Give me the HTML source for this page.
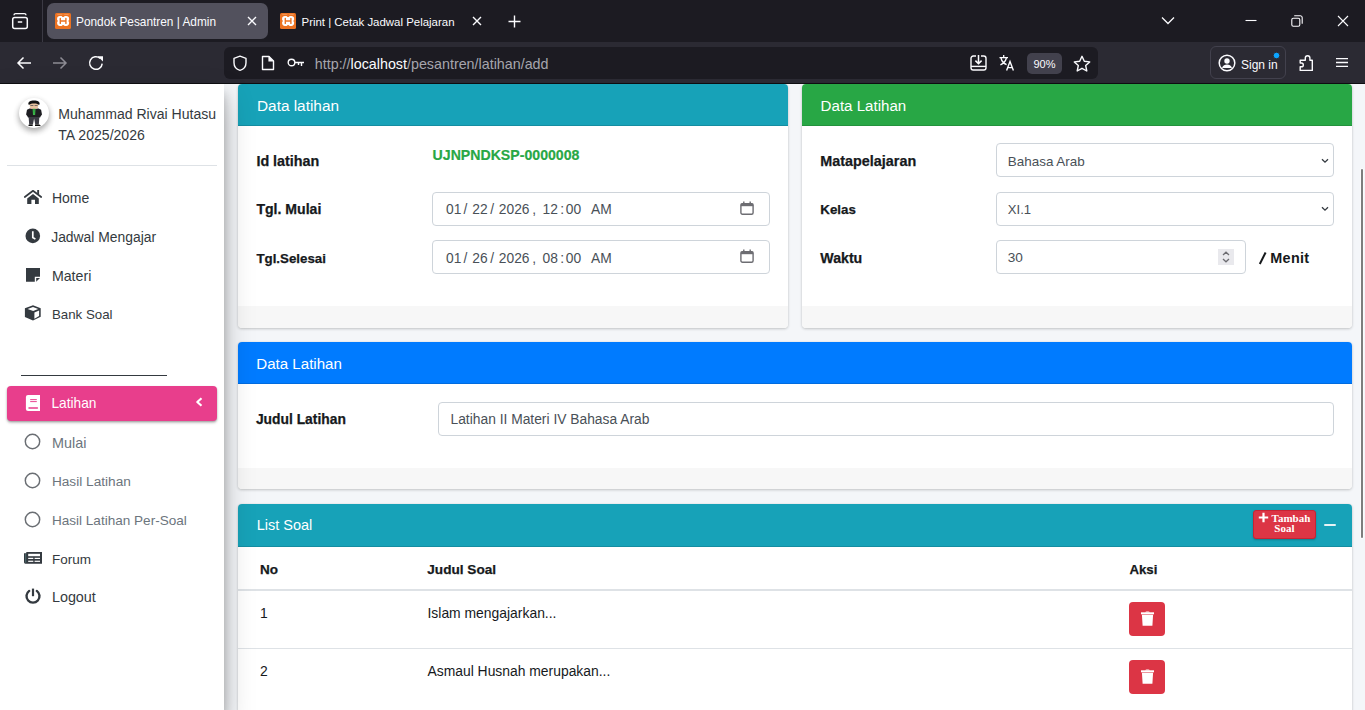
<!DOCTYPE html>
<html><head><meta charset="utf-8"><title>Pondok Pesantren | Admin</title>
<style>
*{box-sizing:border-box;margin:0;padding:0}
html,body{width:1365px;height:710px;overflow:hidden;background:#f4f6f9;font-family:"Liberation Sans",sans-serif}
body{position:relative}
.a{position:absolute;display:block}
.t{position:absolute;white-space:pre;font-family:"Liberation Sans",sans-serif}
</style></head><body>
<div class="a" style="left:0px;top:0px;width:1365px;height:42px;background:#1c1b22"></div>
<div class="a" style="left:0px;top:42px;width:1365px;height:41px;background:#2b2a33"></div>
<div class="a" style="left:0px;top:83px;width:1365px;height:1px;background:#0f0f12"></div>
<svg class="a" style="left:8px;top:8px;" width="24" height="24" viewBox="0 0 24 24"><path d="M6 7.2q0-1.6 1.6-1.6h8.8q1.6 0 1.6 1.6" fill="none" stroke="#fbfbfe" stroke-width="1.4"/><rect x="4.7" y="9.4" width="14.6" height="11.2" rx="2" fill="none" stroke="#fbfbfe" stroke-width="1.5"/><path d="M9.8 14h4.4" stroke="#fbfbfe" stroke-width="1.5"/></svg>
<div class="a" style="left:42px;top:0px;width:1px;height:42px;background:#3b3a44"></div>
<div class="a" style="left:47px;top:3px;width:221px;height:36px;background:#52515d;border-radius:7px"></div>
<svg class="a" style="left:55px;top:13px;" width="16" height="16" viewBox="0 0 16 16"><rect x="0" y="0" width="16" height="16" rx="1.5" fill="#ec7322"/><path d="M2.3 1.4h11.4" stroke="#f6a870" stroke-width=".7"/><rect x="2.1" y="3.1" width="12" height="9.8" rx="2.8" fill="#fff"/><circle cx="8.1" cy="2.5" r="1.5" fill="#ec7322"/><circle cx="8.1" cy="13.5" r="1.5" fill="#ec7322"/><circle cx="1.5" cy="8" r="1.2" fill="#ec7322"/><circle cx="14.7" cy="8" r="1.2" fill="#ec7322"/><path d="M5.3 5.5v4.9M10.9 5.5v4.9M5.3 8h5.6" stroke="#ec7322" stroke-width="1.4" stroke-linecap="round"/></svg>
<div class="t" style="left:76px;top:16.67px;font-size:11.85px;line-height:11.85px;color:#fbfbfe;font-weight:normal;font-family:'Liberation Sans', sans-serif;">Pondok Pesantren | Admin</div>
<svg class="a" style="left:247px;top:16px;" width="10" height="10" viewBox="0 0 10 10"><path d="M1 1l8 8M9 1l-8 8" stroke="#fbfbfe" stroke-width="1.4"/></svg>
<svg class="a" style="left:280px;top:13px;" width="16" height="16" viewBox="0 0 16 16"><rect x="0" y="0" width="16" height="16" rx="1.5" fill="#ec7322"/><path d="M2.3 1.4h11.4" stroke="#f6a870" stroke-width=".7"/><rect x="2.1" y="3.1" width="12" height="9.8" rx="2.8" fill="#fff"/><circle cx="8.1" cy="2.5" r="1.5" fill="#ec7322"/><circle cx="8.1" cy="13.5" r="1.5" fill="#ec7322"/><circle cx="1.5" cy="8" r="1.2" fill="#ec7322"/><circle cx="14.7" cy="8" r="1.2" fill="#ec7322"/><path d="M5.3 5.5v4.9M10.9 5.5v4.9M5.3 8h5.6" stroke="#ec7322" stroke-width="1.4" stroke-linecap="round"/></svg>
<div class="t" style="left:301.5px;top:17.01px;font-size:11.45px;line-height:11.45px;color:#fbfbfe;font-weight:normal;font-family:'Liberation Sans', sans-serif;">Print | Cetak Jadwal Pelajaran</div>
<svg class="a" style="left:472px;top:16px;" width="10" height="10" viewBox="0 0 10 10"><path d="M1 1l8 8M9 1l-8 8" stroke="#fbfbfe" stroke-width="1.4"/></svg>
<svg class="a" style="left:508px;top:15px;" width="13" height="13" viewBox="0 0 13 13"><path d="M6.5 0.5v12M0.5 6.5h12" stroke="#fbfbfe" stroke-width="1.4"/></svg>
<svg class="a" style="left:1161px;top:16px;" width="14" height="9" viewBox="0 0 14 9"><path d="M1 1.5l6 6 6-6" fill="none" stroke="#fbfbfe" stroke-width="1.3"/></svg>
<svg class="a" style="left:1245px;top:19px;" width="12" height="3" viewBox="0 0 12 3"><path d="M0.5 1.5h11" stroke="#fbfbfe" stroke-width="1.1"/></svg>
<svg class="a" style="left:1291px;top:15px;" width="12" height="12" viewBox="0 0 12 12"><rect x="0.8" y="3.2" width="8" height="8" rx="1.5" fill="none" stroke="#fbfbfe" stroke-width="1.1"/><path d="M3.2 0.8h6a2 2 0 0 1 2 2v6" fill="none" stroke="#fbfbfe" stroke-width="1.1"/></svg>
<svg class="a" style="left:1337px;top:15px;" width="12" height="12" viewBox="0 0 12 12"><path d="M1 1l10 10M11 1l-10 10" stroke="#fbfbfe" stroke-width="1.1"/></svg>
<svg class="a" style="left:16px;top:56px;" width="16" height="14" viewBox="0 0 16 14"><path d="M15 7H2M7.5 1.5L2 7l5.5 5.5" fill="none" stroke="#fbfbfe" stroke-width="1.5"/></svg>
<svg class="a" style="left:52px;top:56px;" width="16" height="14" viewBox="0 0 16 14"><path d="M1 7h13M8.5 1.5L14 7l-5.5 5.5" fill="none" stroke="#8d8c94" stroke-width="1.5"/></svg>
<svg class="a" style="left:88px;top:55px;" width="16" height="16" viewBox="0 0 16 16"><path d="M14.2 8.6A6.3 6.3 0 1 1 12.2 3.4" fill="none" stroke="#fbfbfe" stroke-width="1.5"/><path d="M9.6 1.2h5.4v5.4z" fill="#fbfbfe"/></svg>
<div class="a" style="left:224px;top:47px;width:874px;height:32px;background:#1c1b22;border-radius:6px"></div>
<svg class="a" style="left:232px;top:55px;" width="16" height="17" viewBox="0 0 16 17"><path d="M8 1.2L2 3.4v4.4c0 3.6 2.6 6.6 6 7.6 3.4-1 6-4 6-7.6V3.4z" fill="none" stroke="#fbfbfe" stroke-width="1.4" stroke-linejoin="round"/></svg>
<svg class="a" style="left:261px;top:55px;" width="14" height="16" viewBox="0 0 14 16"><path d="M1.5 1.5h6.5l4.5 4.5v8.5h-11z" fill="none" stroke="#fbfbfe" stroke-width="1.4" stroke-linejoin="round"/><path d="M8 1.5v4.5h4.5" fill="#fbfbfe" stroke="#fbfbfe" stroke-width="1.2"/></svg>
<svg class="a" style="left:287px;top:57px;" width="18" height="11" viewBox="0 0 18 11"><circle cx="4.5" cy="5.5" r="3.3" fill="none" stroke="#fbfbfe" stroke-width="1.4"/><path d="M8 5.5h9M14.5 5.5v3.5M11.5 5.5v2.5" fill="none" stroke="#fbfbfe" stroke-width="1.4"/></svg>
<div class="t" style="left:314.8px;top:56.90px;font-size:14.3px;line-height:14.3px;color:#a6a5ad;font-weight:normal;font-family:'Liberation Sans', sans-serif;">http://<span style="color:#fbfbfe">localhost</span>/pesantren/latihan/add</div>
<svg class="a" style="left:970px;top:55px;" width="18" height="16" viewBox="0 0 18 16"><path d="M6 1H3.2A2.2 2.2 0 0 0 1 3.2v9.6A2.2 2.2 0 0 0 3.2 15h10.6a2.2 2.2 0 0 0 2.2-2.2V3.2A2.2 2.2 0 0 0 13.8 1H11" fill="none" stroke="#fbfbfe" stroke-width="1.4"/><path d="M1 11.4h15" stroke="#fbfbfe" stroke-width="1.4"/><path d="M8.5 0v8.6M5.4 5.6l3.1 3.1 3.1-3.1" fill="none" stroke="#fbfbfe" stroke-width="1.5"/></svg>
<svg class="a" style="left:998px;top:54px;" width="18" height="18" viewBox="0 0 18 18"><path d="M1.5 3.6h8.5M5.7 1v2.6M3 4c.7 3.2 2.6 5.4 5.6 6.6M8.4 4c-.8 3.2-2.8 5.4-6 6.9" fill="none" stroke="#fbfbfe" stroke-width="1.3"/><path d="M8.6 16.6l3.4-9 3.4 9M9.8 13.6h4.4" fill="none" stroke="#fbfbfe" stroke-width="1.4"/></svg>
<div class="a" style="left:1027px;top:53px;width:35px;height:21px;background:#42414d;border-radius:5px"></div>
<div class="t" style="left:1033.5px;top:58.69px;font-size:11px;line-height:11px;color:#fbfbfe;font-weight:normal;font-family:'Liberation Sans', sans-serif;">90%</div>
<svg class="a" style="left:1073px;top:55px;" width="18" height="17" viewBox="0 0 18 17"><path d="M9 1.3l2.3 5 5.4.6-4 3.7 1.1 5.4L9 13.3l-4.8 2.7 1.1-5.4-4-3.7 5.4-.6z" fill="none" stroke="#fbfbfe" stroke-width="1.4" stroke-linejoin="round"/></svg>
<div class="a" style="left:1210px;top:46px;width:76px;height:33px;border:1px solid #42414d;border-radius:6px"></div>
<svg class="a" style="left:1218px;top:54px;" width="18" height="18" viewBox="0 0 18 18"><circle cx="9" cy="9" r="7.8" fill="none" stroke="#fbfbfe" stroke-width="1.5"/><circle cx="9" cy="7" r="2.7" fill="#fbfbfe"/><path d="M4 14c1-2.4 2.8-3.4 5-3.4s4 1 5 3.4" fill="#fbfbfe"/></svg>
<div class="t" style="left:1241px;top:58.84px;font-size:12.0px;line-height:12.0px;color:#fbfbfe;font-weight:normal;font-family:'Liberation Sans', sans-serif;">Sign in</div>
<svg class="a" style="left:1272px;top:51px;" width="9" height="9" viewBox="0 0 9 9"><circle cx="4.5" cy="4.5" r="3.3" fill="#0ba4ff" stroke="#2b2a33" stroke-width="1"/></svg>
<svg class="a" style="left:1299px;top:54px;" width="16" height="18" viewBox="0 0 16 18"><path d="M4.3 6.2h2V4a2.3 2.3 0 0 1 4.6 0v2.2h2.4V16.4H1.2v-3.6H2.4a1.9 1.9 0 0 0 0-3.8H1.2V6.2z" fill="none" stroke="#fbfbfe" stroke-width="1.4" stroke-linejoin="round"/></svg>
<svg class="a" style="left:1335px;top:57px;" width="14" height="11" viewBox="0 0 14 11"><path d="M1 1.6h12M1 5.5h12M1 9.4h12" stroke="#fbfbfe" stroke-width="1.3"/></svg>
<div class="a" style="left:0px;top:84px;width:1365px;height:626px;background:#f4f6f9"></div>
<div class="a" style="left:238px;top:84px;width:550px;height:244px;background:#fff;border-radius:4px;box-shadow:0 0 1px rgba(0,0,0,.125),0 1px 3px rgba(0,0,0,.2)"></div>
<div class="a" style="left:238px;top:84px;width:550px;height:42px;background:#17a2b8;border-radius:4px 4px 0 0;border-bottom:1px solid rgba(0,0,0,.125)"></div>
<div class="a" style="left:238px;top:306px;width:550px;height:22px;background:#f7f7f7;border-radius:0 0 4px 4px"></div>
<div class="t" style="left:257px;top:97.90px;font-size:15.36px;line-height:15.36px;color:#fff;font-weight:normal;font-family:'Liberation Sans', sans-serif;">Data latihan</div>
<div class="t" style="left:256.4px;top:153.85px;font-size:14.35px;line-height:14.35px;color:#16191c;font-weight:bold;font-family:'Liberation Sans', sans-serif;-webkit-text-stroke:0.25px #16191c">Id latihan</div>
<div class="t" style="left:432.6px;top:148.33px;font-size:14.14px;line-height:14.14px;color:#28a745;font-weight:bold;font-family:'Liberation Sans', sans-serif;-webkit-text-stroke:0.2px #28a745">UJNPNDKSP-0000008</div>
<div class="t" style="left:256.4px;top:202.46px;font-size:14.1px;line-height:14.1px;color:#16191c;font-weight:bold;font-family:'Liberation Sans', sans-serif;-webkit-text-stroke:0.25px #16191c">Tgl. Mulai</div>
<div class="t" style="left:256.4px;top:251.94px;font-size:13.3px;line-height:13.3px;color:#16191c;font-weight:bold;font-family:'Liberation Sans', sans-serif;-webkit-text-stroke:0.25px #16191c">Tgl.Selesai</div>
<div class="a" style="left:432px;top:192px;width:338px;height:34px;background:#fff;border:1px solid #ced4da;border-radius:4px"></div>
<div class="t" style="left:446px;top:203.12px;font-size:13.8px;line-height:13.8px;color:#495057;font-weight:normal;font-family:'Liberation Sans', sans-serif;">01</div>
<div class="t" style="left:463.5px;top:203.12px;font-size:13.8px;line-height:13.8px;color:#495057;font-weight:normal;font-family:'Liberation Sans', sans-serif;">/</div>
<div class="t" style="left:472.3px;top:203.12px;font-size:13.8px;line-height:13.8px;color:#495057;font-weight:normal;font-family:'Liberation Sans', sans-serif;">22</div>
<div class="t" style="left:490.2px;top:203.12px;font-size:13.8px;line-height:13.8px;color:#495057;font-weight:normal;font-family:'Liberation Sans', sans-serif;">/</div>
<div class="t" style="left:498.8px;top:203.12px;font-size:13.8px;line-height:13.8px;color:#495057;font-weight:normal;font-family:'Liberation Sans', sans-serif;">2026</div>
<div class="t" style="left:532.3px;top:203.12px;font-size:13.8px;line-height:13.8px;color:#495057;font-weight:normal;font-family:'Liberation Sans', sans-serif;">,</div>
<div class="t" style="left:542.5px;top:203.12px;font-size:13.8px;line-height:13.8px;color:#495057;font-weight:normal;font-family:'Liberation Sans', sans-serif;">12</div>
<div class="t" style="left:560.2px;top:203.12px;font-size:13.8px;line-height:13.8px;color:#495057;font-weight:normal;font-family:'Liberation Sans', sans-serif;">:</div>
<div class="t" style="left:565.8px;top:203.12px;font-size:13.8px;line-height:13.8px;color:#495057;font-weight:normal;font-family:'Liberation Sans', sans-serif;">00</div>
<div class="t" style="left:591px;top:203.12px;font-size:13.8px;line-height:13.8px;color:#495057;font-weight:normal;font-family:'Liberation Sans', sans-serif;">AM</div>
<svg class="a" style="left:740px;top:201px;" width="14" height="14" viewBox="0 0 14 14"><rect x="0.9" y="2.6" width="12.2" height="10.6" rx="1.5" fill="none" stroke="#6d6d72" stroke-width="1.4"/><rect x="0.9" y="2.6" width="12.2" height="2.6" fill="#6d6d72"/><path d="M3.8 0.5v3M10.2 0.5v3" stroke="#6d6d72" stroke-width="1.4"/></svg>
<div class="a" style="left:432px;top:240px;width:338px;height:34px;background:#fff;border:1px solid #ced4da;border-radius:4px"></div>
<div class="t" style="left:446px;top:252.22px;font-size:13.8px;line-height:13.8px;color:#495057;font-weight:normal;font-family:'Liberation Sans', sans-serif;">01</div>
<div class="t" style="left:463.5px;top:252.22px;font-size:13.8px;line-height:13.8px;color:#495057;font-weight:normal;font-family:'Liberation Sans', sans-serif;">/</div>
<div class="t" style="left:472.3px;top:252.22px;font-size:13.8px;line-height:13.8px;color:#495057;font-weight:normal;font-family:'Liberation Sans', sans-serif;">26</div>
<div class="t" style="left:490.2px;top:252.22px;font-size:13.8px;line-height:13.8px;color:#495057;font-weight:normal;font-family:'Liberation Sans', sans-serif;">/</div>
<div class="t" style="left:498.8px;top:252.22px;font-size:13.8px;line-height:13.8px;color:#495057;font-weight:normal;font-family:'Liberation Sans', sans-serif;">2026</div>
<div class="t" style="left:532.3px;top:252.22px;font-size:13.8px;line-height:13.8px;color:#495057;font-weight:normal;font-family:'Liberation Sans', sans-serif;">,</div>
<div class="t" style="left:542.5px;top:252.22px;font-size:13.8px;line-height:13.8px;color:#495057;font-weight:normal;font-family:'Liberation Sans', sans-serif;">08</div>
<div class="t" style="left:560.2px;top:252.22px;font-size:13.8px;line-height:13.8px;color:#495057;font-weight:normal;font-family:'Liberation Sans', sans-serif;">:</div>
<div class="t" style="left:565.8px;top:252.22px;font-size:13.8px;line-height:13.8px;color:#495057;font-weight:normal;font-family:'Liberation Sans', sans-serif;">00</div>
<div class="t" style="left:591px;top:252.22px;font-size:13.8px;line-height:13.8px;color:#495057;font-weight:normal;font-family:'Liberation Sans', sans-serif;">AM</div>
<svg class="a" style="left:740px;top:249px;" width="14" height="14" viewBox="0 0 14 14"><rect x="0.9" y="2.6" width="12.2" height="10.6" rx="1.5" fill="none" stroke="#6d6d72" stroke-width="1.4"/><rect x="0.9" y="2.6" width="12.2" height="2.6" fill="#6d6d72"/><path d="M3.8 0.5v3M10.2 0.5v3" stroke="#6d6d72" stroke-width="1.4"/></svg>
<div class="a" style="left:802px;top:84px;width:550px;height:244px;background:#fff;border-radius:4px;box-shadow:0 0 1px rgba(0,0,0,.125),0 1px 3px rgba(0,0,0,.2)"></div>
<div class="a" style="left:802px;top:84px;width:550px;height:42px;background:#28a745;border-radius:4px 4px 0 0;border-bottom:1px solid rgba(0,0,0,.125)"></div>
<div class="a" style="left:802px;top:306px;width:550px;height:22px;background:#f7f7f7;border-radius:0 0 4px 4px"></div>
<div class="t" style="left:820.6px;top:98.12px;font-size:15.1px;line-height:15.1px;color:#fff;font-weight:normal;font-family:'Liberation Sans', sans-serif;">Data Latihan</div>
<div class="t" style="left:820.3px;top:153.82px;font-size:14.39px;line-height:14.39px;color:#16191c;font-weight:bold;font-family:'Liberation Sans', sans-serif;-webkit-text-stroke:0.25px #16191c">Matapelajaran</div>
<div class="a" style="left:996px;top:143px;width:338px;height:34px;background:#fff;border:1px solid #ced4da;border-radius:4px"></div>
<div class="t" style="left:1007.8px;top:154.61px;font-size:13.45px;line-height:13.45px;color:#495057;font-weight:normal;font-family:'Liberation Sans', sans-serif;">Bahasa Arab</div>
<svg class="a" style="left:1321px;top:158px;" width="8" height="6" viewBox="0 0 8 6"><path d="M1 1.2l3 3 3-3" fill="none" stroke="#343a40" stroke-width="1.3"/></svg>
<div class="t" style="left:820.3px;top:203.24px;font-size:13.3px;line-height:13.3px;color:#16191c;font-weight:bold;font-family:'Liberation Sans', sans-serif;-webkit-text-stroke:0.25px #16191c">Kelas</div>
<div class="a" style="left:996px;top:192px;width:338px;height:34px;background:#fff;border:1px solid #ced4da;border-radius:4px"></div>
<div class="t" style="left:1007.8px;top:202.91px;font-size:13.1px;line-height:13.1px;color:#495057;font-weight:normal;font-family:'Liberation Sans', sans-serif;">XI.1</div>
<svg class="a" style="left:1321px;top:206px;" width="8" height="6" viewBox="0 0 8 6"><path d="M1 1.2l3 3 3-3" fill="none" stroke="#343a40" stroke-width="1.3"/></svg>
<div class="t" style="left:820.3px;top:251.01px;font-size:14.17px;line-height:14.17px;color:#16191c;font-weight:bold;font-family:'Liberation Sans', sans-serif;-webkit-text-stroke:0.25px #16191c">Waktu</div>
<div class="a" style="left:996px;top:240px;width:250px;height:34px;background:#fff;border:1px solid #ced4da;border-radius:4px"></div>
<div class="t" style="left:1007.8px;top:251.49px;font-size:13.6px;line-height:13.6px;color:#495057;font-weight:normal;font-family:'Liberation Sans', sans-serif;">30</div>
<div class="a" style="left:1218px;top:249px;width:16px;height:16px;background:#e9e9ed"></div>
<svg class="a" style="left:1221px;top:250px;" width="10" height="14" viewBox="0 0 10 14"><path d="M2 5l3-2.8 3 2.8M2 9l3 2.8 3-2.8" fill="none" stroke="#6d6d72" stroke-width="1.3"/></svg>
<svg class="a" style="left:1258px;top:251px;" width="10" height="14" viewBox="0 0 10 14"><path d="M1.8 13L7.6 1.5" stroke="#16191c" stroke-width="2"/></svg>
<div class="t" style="left:1270.3px;top:251.01px;font-size:14.4px;line-height:14.4px;color:#16191c;font-weight:bold;font-family:'Liberation Sans', sans-serif;letter-spacing:0.3px">Menit</div>
<div class="a" style="left:238px;top:342px;width:1114px;height:147px;background:#fff;border-radius:4px;box-shadow:0 0 1px rgba(0,0,0,.125),0 1px 3px rgba(0,0,0,.2)"></div>
<div class="a" style="left:238px;top:342px;width:1114px;height:42px;background:#007bff;border-radius:4px 4px 0 0;border-bottom:1px solid rgba(0,0,0,.125)"></div>
<div class="a" style="left:238px;top:468px;width:1114px;height:21px;background:#f7f7f7;border-radius:0 0 4px 4px"></div>
<div class="t" style="left:256.3px;top:356.02px;font-size:15.1px;line-height:15.1px;color:#fff;font-weight:normal;font-family:'Liberation Sans', sans-serif;">Data Latihan</div>
<div class="t" style="left:255.9px;top:412.88px;font-size:13.85px;line-height:13.85px;color:#16191c;font-weight:bold;font-family:'Liberation Sans', sans-serif;-webkit-text-stroke:0.25px #16191c">Judul Latihan</div>
<div class="a" style="left:438px;top:402px;width:896px;height:34px;background:#fff;border:1px solid #ced4da;border-radius:4px"></div>
<div class="t" style="left:450.5px;top:412.90px;font-size:13.82px;line-height:13.82px;color:#495057;font-weight:normal;font-family:'Liberation Sans', sans-serif;">Latihan II Materi IV Bahasa Arab</div>
<div class="a" style="left:238px;top:504px;width:1114px;height:260px;background:#fff;border-radius:4px;box-shadow:0 0 1px rgba(0,0,0,.125),0 1px 3px rgba(0,0,0,.2)"></div>
<div class="a" style="left:238px;top:504px;width:1114px;height:43px;background:#17a2b8;border-radius:4px 4px 0 0;border-bottom:1px solid rgba(0,0,0,.125)"></div>
<div class="t" style="left:256.7px;top:517.63px;font-size:14.5px;line-height:14.5px;color:#fff;font-weight:normal;font-family:'Liberation Sans', sans-serif;">List Soal</div>
<div class="a" style="left:1253px;top:510px;width:63px;height:29px;background:#dc3545;border:1px solid #c82333;border-radius:3px;box-shadow:0 1px 2px rgba(0,0,0,.25)"></div>
<div class="t" style="left:1271.6px;top:512.69px;font-size:11px;line-height:11px;color:#fff;font-weight:bold;font-family:'Liberation Serif',serif;">Tambah</div>
<div class="t" style="left:1274.3px;top:523.19px;font-size:11px;line-height:11px;color:#fff;font-weight:bold;font-family:'Liberation Serif',serif;">Soal</div>
<svg class="a" style="left:1258px;top:512px;" width="11" height="11" viewBox="0 0 11 11"><path d="M5.5 0.8v9.4M0.8 5.5h9.4" stroke="#fff" stroke-width="2.2"/></svg>
<div class="a" style="left:1324px;top:524px;width:12px;height:2px;background:#e6f3f5;border-radius:1px"></div>
<div class="t" style="left:260px;top:562.97px;font-size:13.5px;line-height:13.5px;color:#16191c;font-weight:bold;font-family:'Liberation Sans', sans-serif;-webkit-text-stroke:0.25px #16191c">No</div>
<div class="t" style="left:427.3px;top:562.89px;font-size:13.6px;line-height:13.6px;color:#16191c;font-weight:bold;font-family:'Liberation Sans', sans-serif;-webkit-text-stroke:0.25px #16191c">Judul Soal</div>
<div class="t" style="left:1129.5px;top:562.83px;font-size:13.2px;line-height:13.2px;color:#16191c;font-weight:bold;font-family:'Liberation Sans', sans-serif;-webkit-text-stroke:0.25px #16191c">Aksi</div>
<div class="a" style="left:238px;top:589px;width:1114px;height:2px;background:#dee2e6"></div>
<div class="t" style="left:260px;top:606.83px;font-size:13.9px;line-height:13.9px;color:#16191c;font-weight:normal;font-family:'Liberation Sans', sans-serif;">1</div>
<div class="t" style="left:427.5px;top:606.83px;font-size:13.9px;line-height:13.9px;color:#16191c;font-weight:normal;font-family:'Liberation Sans', sans-serif;">Islam mengajarkan...</div>
<div class="a" style="left:238px;top:648px;width:1114px;height:1px;background:#dee2e6"></div>
<div class="t" style="left:260px;top:664.83px;font-size:13.9px;line-height:13.9px;color:#16191c;font-weight:normal;font-family:'Liberation Sans', sans-serif;">2</div>
<div class="t" style="left:427.5px;top:664.84px;font-size:13.89px;line-height:13.89px;color:#16191c;font-weight:normal;font-family:'Liberation Sans', sans-serif;">Asmaul Husnah merupakan...</div>
<div class="a" style="left:1129px;top:602px;width:36px;height:34px;background:#dc3545;border-radius:4px"></div>
<svg class="a" style="left:1140px;top:611px;" width="15" height="16" viewBox="0 0 15 16"><path d="M1 1.3h13v2H1z" fill="#fff"/><path d="M5 1.5c.4-.8 1-1.1 1.6-1.1h1.8c.6 0 1.2.3 1.6 1.1z" fill="#fff"/><path d="M1.9 3.7h11.2l-.7 11.1H2.6z" fill="#fff"/></svg>
<div class="a" style="left:1129px;top:660px;width:36px;height:34px;background:#dc3545;border-radius:4px"></div>
<svg class="a" style="left:1140px;top:669px;" width="15" height="16" viewBox="0 0 15 16"><path d="M1 1.3h13v2H1z" fill="#fff"/><path d="M5 1.5c.4-.8 1-1.1 1.6-1.1h1.8c.6 0 1.2.3 1.6 1.1z" fill="#fff"/><path d="M1.9 3.7h11.2l-.7 11.1H2.6z" fill="#fff"/></svg>
<div class="a" style="left:0px;top:84px;width:224px;height:626px;background:#fff;box-shadow:0 14px 28px rgba(0,0,0,.25),0 10px 10px rgba(0,0,0,.22)"></div>
<div class="a" style="left:0px;top:84px;width:224px;height:626px;background:#fff"></div>
<div class="a" style="left:19px;top:98px;width:30px;height:30px;background:#fff;border-radius:50%;box-shadow:0 3px 6px rgba(0,0,0,.16),0 3px 6px rgba(0,0,0,.23)"></div>
<svg class="a" style="left:19px;top:98px;" width="30" height="30" viewBox="0 0 30 30"><path d="M10.5 10.4h9l2.6 1.4.9 4.6-1.3 1.8-.6 1.2H9l-.6-1.2-1.3-1.8.9-4.6z" fill="#1e1e22"/><path d="M13.6 10.4h2.9l-.4 6.6h-2.1z" fill="#3cb54a"/><path d="M14.4 10.6l.65 5.6.65-5.6z" fill="#1f8f33"/><path d="M9.6 19h10.8l-.6 7.6h-3.5l-1.2-6-1.2 6h-3.7z" fill="#3b3b44"/><path d="M9.8 26.6h3.8l.2 1.4H9.4zM16 26.6h4.4l1.6 1.4h-6z" fill="#0e0e0e"/><rect x="10.8" y="4.6" width="8.4" height="6.2" rx="2.6" fill="#e9c29f"/><path d="M9.4 6.6c-.5-2.8 1.8-4 5.6-4s6.1 1.2 5.6 4l-1 .2c-1-.9-2.6-1.3-4.6-1.3s-3.6.4-4.6 1.3z" fill="#131313"/><path d="M11.4 7.5h3M15.6 7.5h3" stroke="#555" stroke-width=".8"/></svg>
<div class="t" style="left:58.3px;top:106.59px;font-size:14.07px;line-height:14.07px;color:#343a40;font-weight:normal;font-family:'Liberation Sans', sans-serif;">Muhammad Rivai Hutasu</div>
<div class="t" style="left:58.3px;top:128.49px;font-size:14.07px;line-height:14.07px;color:#343a40;font-weight:normal;font-family:'Liberation Sans', sans-serif;">TA 2025/2026</div>
<div class="a" style="left:7px;top:165px;width:210px;height:1px;background:#dee2e6"></div>
<svg class="a" style="left:20px;top:186px;" width="26" height="26" viewBox="0 0 26 26"><path d="M4.8 11L13 4.8l8.2 6.2" fill="none" stroke="#343a40" stroke-width="1.7" stroke-linecap="round" stroke-linejoin="round"/><rect x="17.2" y="4" width="1.9" height="4.2" fill="#343a40"/><path d="M7.2 12.4L13 8l5.8 4.4V18H15v-4.3h-3.6V18H7.2z" fill="#343a40"/></svg>
<div class="t" style="left:51.9px;top:190.95px;font-size:14.0px;line-height:14.0px;color:#343a40;font-weight:normal;font-family:'Liberation Sans', sans-serif;">Home</div>
<svg class="a" style="left:20px;top:224px;" width="26" height="26" viewBox="0 0 26 26"><circle cx="12.8" cy="11.9" r="7.3" fill="#343a40"/><path d="M12.8 7.2v6.3l2.6 1.6" fill="none" stroke="#fff" stroke-width="1.7"/></svg>
<div class="t" style="left:51.2px;top:230.64px;font-size:13.89px;line-height:13.89px;color:#343a40;font-weight:normal;font-family:'Liberation Sans', sans-serif;">Jadwal Mengajar</div>
<svg class="a" style="left:20px;top:262px;" width="26" height="26" viewBox="0 0 26 26"><path d="M6 6h14v8.8h-5.2V19.8H6z" fill="#343a40"/><path d="M16.2 16h3.8l-3.8 3.8z" fill="#343a40"/></svg>
<div class="t" style="left:51.9px;top:268.78px;font-size:14.2px;line-height:14.2px;color:#343a40;font-weight:normal;font-family:'Liberation Sans', sans-serif;">Materi</div>
<svg class="a" style="left:20px;top:300px;" width="26" height="26" viewBox="0 0 26 26"><path d="M13 5.3l7.7 2.9v8.5L13 20.6 4.9 16.9V8.2z" fill="#343a40"/><path d="M13 7.1l5.2 1.9-5 2.1-5.6-2.1z" fill="#fff"/><path d="M14.4 12.4l4.7-2v5.7l-4.7 2.6z" fill="#fff"/></svg>
<div class="t" style="left:51.9px;top:307.64px;font-size:13.3px;line-height:13.3px;color:#343a40;font-weight:normal;font-family:'Liberation Sans', sans-serif;">Bank Soal</div>
<div class="a" style="left:21px;top:375px;width:146px;height:1px;background:#343a40"></div>
<div class="a" style="left:7px;top:386px;width:210px;height:35px;background:#e83e8c;border-radius:4px;box-shadow:0 2px 3px rgba(0,0,0,.18),0 1px 2px rgba(0,0,0,.24)"></div>
<svg class="a" style="left:20px;top:390px;" width="26" height="26" viewBox="0 0 26 26"><path d="M8 5h12v16H8a2.1 2.1 0 0 1-2.1-2.1V7.1A2.1 2.1 0 0 1 8 5z" fill="#fff"/><path d="M10.2 9.6h6.6M10.2 11.6h6.6" stroke="#e83e8c" stroke-width="0.95"/><path d="M9 18.1h8.4" stroke="#e83e8c" stroke-width="1.5" stroke-linecap="round"/></svg>
<div class="t" style="left:51.4px;top:397.29px;font-size:13.72px;line-height:13.72px;color:#fff;font-weight:normal;font-family:'Liberation Sans', sans-serif;">Latihan</div>
<svg class="a" style="left:195px;top:397.4px;" width="8" height="10" viewBox="0 0 8 10"><path d="M6.5 1.2L2.3 5l4.2 3.8" fill="none" stroke="#fff" stroke-width="2.2" stroke-linejoin="round"/></svg>
<svg class="a" style="left:24.4px;top:433.2px;" width="17" height="17" viewBox="0 0 17 17"><circle cx="8.5" cy="8.5" r="7.2" fill="none" stroke="#6a6e73" stroke-width="1.45"/></svg>
<div class="t" style="left:52px;top:435.61px;font-size:14.4px;line-height:14.4px;color:#6c757d;font-weight:normal;font-family:'Liberation Sans', sans-serif;">Mulai</div>
<svg class="a" style="left:24.4px;top:472.2px;" width="17" height="17" viewBox="0 0 17 17"><circle cx="8.5" cy="8.5" r="7.2" fill="none" stroke="#6a6e73" stroke-width="1.45"/></svg>
<div class="t" style="left:51.9px;top:474.64px;font-size:13.66px;line-height:13.66px;color:#6c757d;font-weight:normal;font-family:'Liberation Sans', sans-serif;">Hasil Latihan</div>
<svg class="a" style="left:24.4px;top:510.9px;" width="17" height="17" viewBox="0 0 17 17"><circle cx="8.5" cy="8.5" r="7.2" fill="none" stroke="#6a6e73" stroke-width="1.45"/></svg>
<div class="t" style="left:51.9px;top:514.01px;font-size:13.57px;line-height:13.57px;color:#6c757d;font-weight:normal;font-family:'Liberation Sans', sans-serif;">Hasil Latihan Per-Soal</div>
<svg class="a" style="left:20px;top:545px;" width="26" height="26" viewBox="0 0 26 26"><path d="M6.3 7h15.7v11.7H5.4A1.4 1.4 0 0 1 4 17.3V8.3h2.3z" fill="#343a40"/><rect x="5.2" y="8.6" width="1" height="9" fill="#5f8d8d" opacity=".6"/><rect x="8.2" y="8.8" width="11.8" height="2.4" fill="#fff"/><rect x="8.2" y="12.8" width="5.1" height="1.2" fill="#fff"/><rect x="14.6" y="12.8" width="5.4" height="1.2" fill="#fff"/><rect x="8.2" y="15.7" width="5.1" height="1.2" fill="#fff"/><rect x="14.6" y="15.7" width="5.4" height="1.2" fill="#fff"/></svg>
<div class="t" style="left:51.9px;top:552.97px;font-size:13.5px;line-height:13.5px;color:#343a40;font-weight:normal;font-family:'Liberation Sans', sans-serif;">Forum</div>
<svg class="a" style="left:20px;top:584px;" width="26" height="26" viewBox="0 0 26 26"><path d="M9.2 6.9A6.5 6.5 0 1 0 16.8 6.9" fill="none" stroke="#343a40" stroke-width="2.4" stroke-linecap="round"/><path d="M13 4.6v7.6" stroke="#343a40" stroke-width="2.2" /></svg>
<div class="t" style="left:51.9px;top:589.82px;font-size:14.39px;line-height:14.39px;color:#343a40;font-weight:normal;font-family:'Liberation Sans', sans-serif;">Logout</div>
<div class="a" style="left:1361px;top:169px;width:2px;height:369px;background:#7d7d7d;border-radius:1px;box-shadow:0 0 0 1px rgba(255,255,255,.6)"></div>
</body></html>
